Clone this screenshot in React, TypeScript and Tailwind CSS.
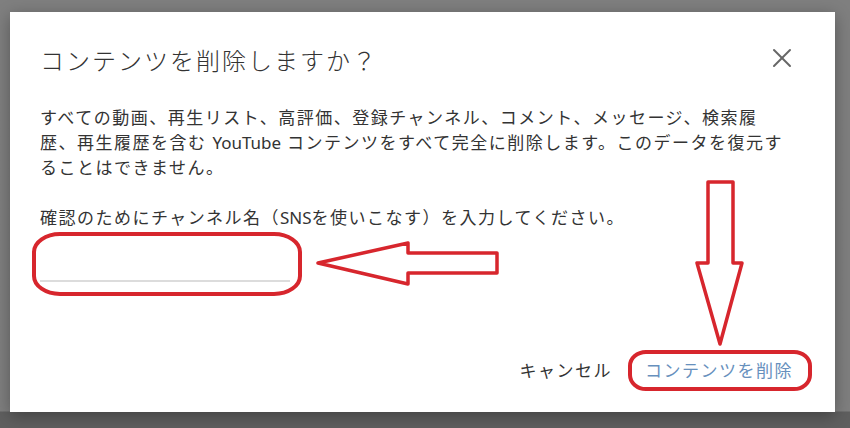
import { X } from "lucide-react";

function Annotations() {
  const red = "#d7262d";
  return (
    <svg
      className="absolute inset-0 pointer-events-none"
      width={850}
      height={428}
      viewBox="0 0 850 428"
      fill="none"
    >
      {/* around the input */}
      <rect x={34} y={234} width={266} height={60} rx={26} ry={18} stroke={red} strokeWidth={4} />
      {/* left arrow */}
      <polygon
        points="318,263 408,243 408,253 497,253 497,273 408,273 408,284"
        stroke={red}
        strokeWidth={3.5}
        strokeLinejoin="round"
        fill="white"
      />
      {/* down arrow */}
      <polygon
        points="708,182 733,182 733,263 742,263 720,344 697,263 708,263"
        stroke={red}
        strokeWidth={3.5}
        strokeLinejoin="round"
        fill="white"
      />
      {/* around the delete button */}
      <rect x={630} y={352} width={180} height={37} rx={16} ry={14} stroke={red} strokeWidth={4} />
    </svg>
  );
}

export default function App() {
  return (
    <div className="relative w-[850px] h-[428px] overflow-hidden pt-[12px] pl-[10px] bg-linear-to-b from-[#7f7f7f] from-[96%] to-[#5f5f5f] to-[96.3%] font-['Noto_Sans','Noto_Sans_CJK_JP',sans-serif]">
      <div className="w-[825px] h-[400px] bg-white flex flex-col pt-[33px] shadow-[0_4px_16px_rgba(0,0,0,0.32)]">
        <div className="flex items-center justify-between h-[32px] pl-[30px] pr-[37px]">
          <h1 className="text-[24px] leading-[32px] tracking-[2px] font-light text-[#333]">
            コンテンツを削除しますか？
          </h1>
          <button className="h-[32px] w-[32px] flex items-center justify-center -translate-y-[3px] text-[#666]">
            <X size={32} strokeWidth={1.5} />
          </button>
        </div>

        <p className="mt-[28px] pl-[30px] text-[17px] leading-[25px] tracking-[1.5px] text-[#333] whitespace-nowrap">
          すべての動画、再生リスト、高評価、登録チャンネル、コメント、メッセージ、検索履
          <br />
          歴、再生履歴を含む <span className="tracking-normal">YouTube</span> コンテンツをすべて完全に削除します。このデータを復元す
          <br />
          ることはできません。
        </p>

        <p className="mt-[25px] pl-[30px] text-[17px] leading-[25px] tracking-[1.5px] text-[#333] whitespace-nowrap">
          確認のためにチャンネル名（<span className="tracking-normal">SNS</span>を使いこなす）を入力してください。
        </p>

        <input
          className="ml-[30px] mt-[2px] w-[250px] h-[50px] border-b-2 border-[#dcdcdc] outline-none text-[17px]"
          aria-label="チャンネル名"
        />

        <div className="mt-auto flex justify-end items-center gap-[33px] pr-[42px] pb-[23px]">
          <button className="h-[36px] text-[17px] tracking-[1.5px] text-[#333]">キャンセル</button>
          <button className="h-[36px] text-[17px] tracking-[1.5px] text-[#6790bd]">コンテンツを削除</button>
        </div>
      </div>
      <Annotations />
    </div>
  );
}
